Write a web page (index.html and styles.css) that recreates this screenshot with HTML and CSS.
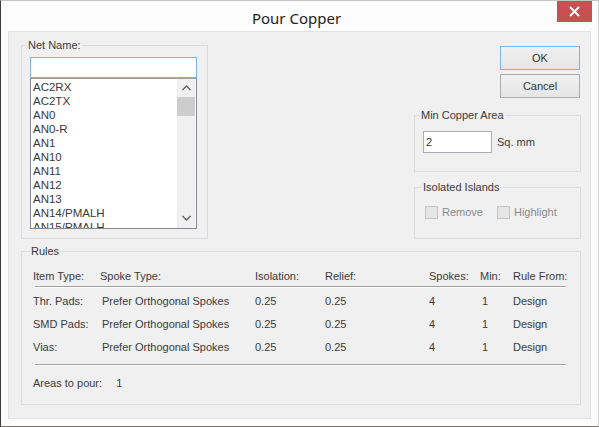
FILE: index.html
```html
<!DOCTYPE html>
<html lang="en">
<head>
    <meta charset="UTF-8" />
    <title>Pour Copper</title>
    <link rel="stylesheet" href="styles.css">
</head>
<body>
    <div class="window">
        <div class="titlebar">
            <span></span>
            <div class="title">Pour Copper</div>
            <div class="close">
                <svg width="35" height="21" viewBox="0 0 35 21">
                    <path d="M13 6 L22 15 M22 6 L13 15" stroke="#fff" stroke-width="2" fill="none"/>
                </svg>
            </div>
        </div>
        <div class="client">
            <div class="top-row">
                <fieldset class="group net-group">
                    <legend>Net Name:</legend>
                    <input class="net-input" type="text">
                    <div class="listbox">
                        <ul class="items">
                            <li>AC2RX</li>
                            <li>AC2TX</li>
                            <li>AN0</li>
                            <li>AN0-R</li>
                            <li>AN1</li>
                            <li>AN10</li>
                            <li>AN11</li>
                            <li>AN12</li>
                            <li>AN13</li>
                            <li>AN14/PMALH</li>
                            <li>AN15/PMALH</li>
                        </ul>
                        <div class="scrollbar">
                            <div class="arrow">
                                <svg width="9" height="6" viewBox="0 0 9 6"><polyline points="0.5,5 4.5,1 8.5,5" stroke="#606060" stroke-width="1.4" fill="none"/></svg>
                            </div>
                            <div class="thumb"></div>
                            <div class="track"></div>
                            <div class="arrow down">
                                <svg width="9" height="6" viewBox="0 0 9 6"><polyline points="0.5,1 4.5,5 8.5,1" stroke="#606060" stroke-width="1.4" fill="none"/></svg>
                            </div>
                        </div>
                    </div>
                </fieldset>

                <div class="side">
                    <div class="buttons">
                        <button class="btn default">OK</button>
                        <button class="btn">Cancel</button>
                    </div>
                    <fieldset class="group area-group">
                        <legend>Min Copper Area</legend>
                        <div class="area-row">
                            <input class="area-input" type="text" value="2">
                            <span>Sq. mm</span>
                        </div>
                    </fieldset>
                    <fieldset class="group islands-group">
                        <legend>Isolated Islands</legend>
                        <div class="check-row">
                            <span class="check"><span class="box"></span>Remove</span>
                            <span class="check"><span class="box"></span>Highlight</span>
                        </div>
                    </fieldset>
                </div>
            </div>

            <fieldset class="group rules">
                <legend>Rules</legend>
                <div class="grid head">
                    <span>Item Type:</span>
                    <span>Spoke Type:</span>
                    <span>Isolation:</span>
                    <span>Relief:</span>
                    <span>Spokes:</span>
                    <span>Min:</span>
                    <span>Rule From:</span>
                </div>
                <div class="sep"></div>
                <div class="grid rows">
                    <span>Thr. Pads:</span>
                    <span class="spoke">Prefer Orthogonal Spokes</span>
                    <span>0.25</span>
                    <span>0.25</span>
                    <span>4</span>
                    <span class="min">1</span>
                    <span>Design</span>

                    <span>SMD Pads:</span>
                    <span class="spoke">Prefer Orthogonal Spokes</span>
                    <span>0.25</span>
                    <span>0.25</span>
                    <span>4</span>
                    <span class="min">1</span>
                    <span>Design</span>

                    <span>Vias:</span>
                    <span class="spoke">Prefer Orthogonal Spokes</span>
                    <span>0.25</span>
                    <span>0.25</span>
                    <span>4</span>
                    <span class="min">1</span>
                    <span>Design</span>
                </div>
                <div class="sep lower"></div>
                <div class="areas">
                    <span>Areas to pour:</span>
                    <span class="count">1</span>
                </div>
            </fieldset>
        </div>
    </div>
</body>
</html>
```

FILE: styles.css
```css
body {
    margin: 0;
    background: #ffffff;
    font-family: "Liberation Sans", Arial, sans-serif;
    font-size: 11px;
    color: #3a3a3a;
}
.window {
    width: 599px;
    height: 427px;
    box-sizing: border-box;
    border-top: 1px solid #c4c4c4;
    border-left: 1px solid #3c3c3c;
    border-right: 1px solid #d2d2d2;
    border-bottom: 1px solid #7a6e66;
    background: #fcfcfc;
    display: flex;
    flex-direction: column;
}
.titlebar {
    height: 30px;
    display: grid;
    grid-template-columns: 1fr auto 1fr;
    padding-right: 6px;
}
.title {
    font-family: "Noto Sans", sans-serif;
    font-size: 15px;
    line-height: 30px;
    padding-top: 2px;
    color: #222;
}
.close {
    justify-self: end;
    width: 35px;
    height: 21px;
    background: #c75050;
}
.close svg {
    display: block;
}
.client {
    flex: 1;
    margin: 0 7px 7px 7px;
    border: 1px solid #e2e2e2;
    background: #f0f0f0;
    padding: 7px 9px 0 12px;
}
.top-row {
    display: flex;
    justify-content: space-between;
}
.group {
    margin: 0;
    min-width: 0;
    border: 1px solid #dcdcdc;
    box-sizing: border-box;
}
.group legend {
    font-size: 11px;
    line-height: 12px;
    padding: 0 1px;
    margin-left: -3px;
}
.net-group {
    width: 187px;
    padding: 6px 10px 9px 8px;
}
.net-input {
    display: block;
    width: 167px;
    height: 21px;
    box-sizing: border-box;
    margin: 0;
    border: 1px solid #7eb4ea;
    background: #fff;
    outline: none;
}
.listbox {
    display: flex;
    width: 167px;
    height: 151px;
    box-sizing: border-box;
    border: 1px solid #828790;
    border-top-color: #a0a0a0;
    background: #fff;
    overflow: hidden;
}
.items {
    flex: 1;
    list-style: none;
    margin: 0;
    padding: 1px 0 0 2px;
    font-size: 11.5px;
}
.items li {
    line-height: 14px;
    white-space: nowrap;
}
.scrollbar {
    width: 18px;
    margin-right: 1px;
    background: #f0f0f0;
    display: flex;
    flex-direction: column;
}
.arrow {
    height: 18px;
    display: flex;
    align-items: center;
    justify-content: center;
}
.arrow.down {
    height: 17px;
    align-items: flex-start;
    padding-top: 4px;
    box-sizing: border-box;
}
.arrow svg {
    display: block;
}
.thumb {
    height: 19px;
    background: #cdcdcd;
}
.track {
    flex: 1;
}
.side {
    width: 167px;
    display: flex;
    flex-direction: column;
}
.buttons {
    align-self: flex-end;
    margin: 7px 1px 0 0;
    display: flex;
    flex-direction: column;
    gap: 4px;
}
.btn {
    width: 80px;
    height: 24px;
    margin: 0;
    padding: 0;
    font-family: "Liberation Sans", Arial, sans-serif;
    font-size: 11px;
    color: #333;
    border: 1px solid #acacac;
    background: linear-gradient(#f0f0f0, #e5e5e5);
}
.btn.default {
    border-color: #7eb4ea;
}
.area-group {
    margin-top: 11px;
    height: 63px;
    padding: 10px 8px 0 8px;
}
.area-row {
    display: flex;
    align-items: center;
    gap: 5px;
}
.area-input {
    width: 69px;
    height: 22px;
    box-sizing: border-box;
    margin: 0;
    padding: 0 2px;
    border: 1px solid #abadb3;
    background: #fff;
    font-family: "Liberation Sans", Arial, sans-serif;
    font-size: 11px;
    color: #333;
    outline: none;
}
.islands-group {
    margin-top: 9px;
    height: 58px;
    padding: 12px 8px 0 10px;
}
.check-row {
    display: flex;
    gap: 14px;
    line-height: 14px;
    color: #8a8a8a;
}
.check {
    display: flex;
    align-items: center;
    gap: 4px;
}
.box {
    width: 13px;
    height: 13px;
    box-sizing: border-box;
    border: 1px solid #c4c4c4;
    background: #e6e6e6;
}
.rules {
    margin-top: 6px;
    padding: 12px 14px 14px 11px;
}
.grid {
    display: grid;
    grid-template-columns: 67px 155px 70px 104px 51px 33px 53px;
    white-space: nowrap;
}
.head {
    line-height: 14px;
}
.rows {
    margin-top: 2px;
    line-height: 23px;
}
.rows .spoke {
    padding-left: 2px;
}
.rows .min {
    padding-left: 2px;
}
.sep {
    margin: 3px 0 0 2px;
    border-top: 1px solid #a0a0a0;
    border-bottom: 1px solid #ffffff;
}
.sep.lower {
    margin-top: 5px;
}
.areas {
    margin-top: 10px;
    line-height: 14px;
}
.areas .count {
    margin-left: 11px;
}
```
